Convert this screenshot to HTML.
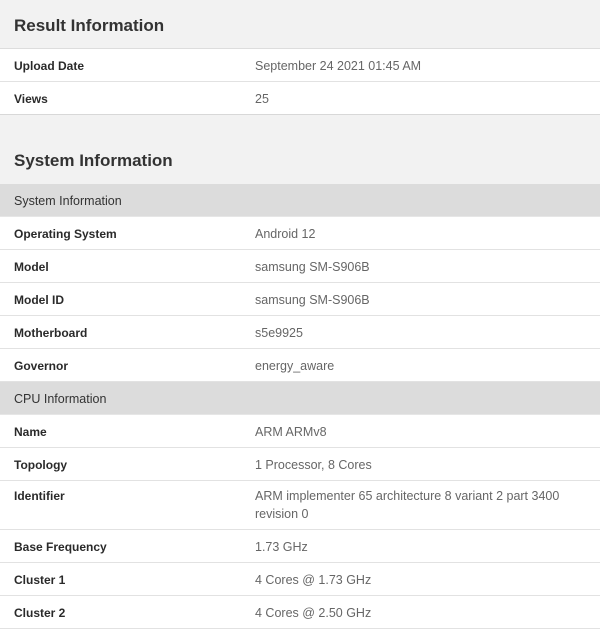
<!DOCTYPE html>
<html><head><style>
body{margin:0;width:600px;height:628px;overflow:hidden;background:#f2f2f2;font-family:"Liberation Sans",sans-serif;}
h2{margin:0;font-size:17px;font-weight:bold;color:#333;padding-left:14px;box-sizing:border-box;}
.r{display:flex;background:#fff;border-bottom:1px solid #e2e2e2;box-sizing:border-box;height:33px;align-items:center;font-size:12.5px;padding-top:1px;}
.r .k{width:241px;padding-left:14px;font-weight:bold;color:#2a2a2a;font-size:12px;line-height:18px;}
.r .v{color:#666;flex:1;line-height:18px;}
.h{background:#dcdcdc;height:33px;display:flex;align-items:center;padding-left:14px;font-size:12.5px;color:#333;border-bottom:1px solid #e6e6e6;box-sizing:border-box;padding-top:1px;}
</style></head><body>
<h2 style="height:49px;line-height:52px;border-bottom:1px solid #ddd;">Result Information</h2>
<div class="r"><div class="k">Upload Date</div><div class="v">September 24 2021 01:45 AM</div></div>
<div class="r" style="border-bottom:1px solid #d8d8d8"><div class="k">Views</div><div class="v">25</div></div>
<h2 style="height:69px;line-height:92px;">System Information</h2>
<div class="h">System Information</div>
<div class="r"><div class="k">Operating System</div><div class="v">Android 12</div></div>
<div class="r"><div class="k">Model</div><div class="v">samsung SM-S906B</div></div>
<div class="r"><div class="k">Model ID</div><div class="v">samsung SM-S906B</div></div>
<div class="r"><div class="k">Motherboard</div><div class="v">s5e9925</div></div>
<div class="r"><div class="k">Governor</div><div class="v">energy_aware</div></div>
<div class="h">CPU Information</div>
<div class="r"><div class="k">Name</div><div class="v">ARM ARMv8</div></div>
<div class="r"><div class="k">Topology</div><div class="v">1 Processor, 8 Cores</div></div>
<div class="r" style="height:49px;align-items:flex-start;padding-top:6px;"><div class="k">Identifier</div><div class="v">ARM implementer 65 architecture 8 variant 2 part 3400<br>revision 0</div></div>
<div class="r"><div class="k">Base Frequency</div><div class="v">1.73 GHz</div></div>
<div class="r"><div class="k">Cluster 1</div><div class="v">4 Cores @ 1.73 GHz</div></div>
<div class="r"><div class="k">Cluster 2</div><div class="v">4 Cores @ 2.50 GHz</div></div>
</body></html>
